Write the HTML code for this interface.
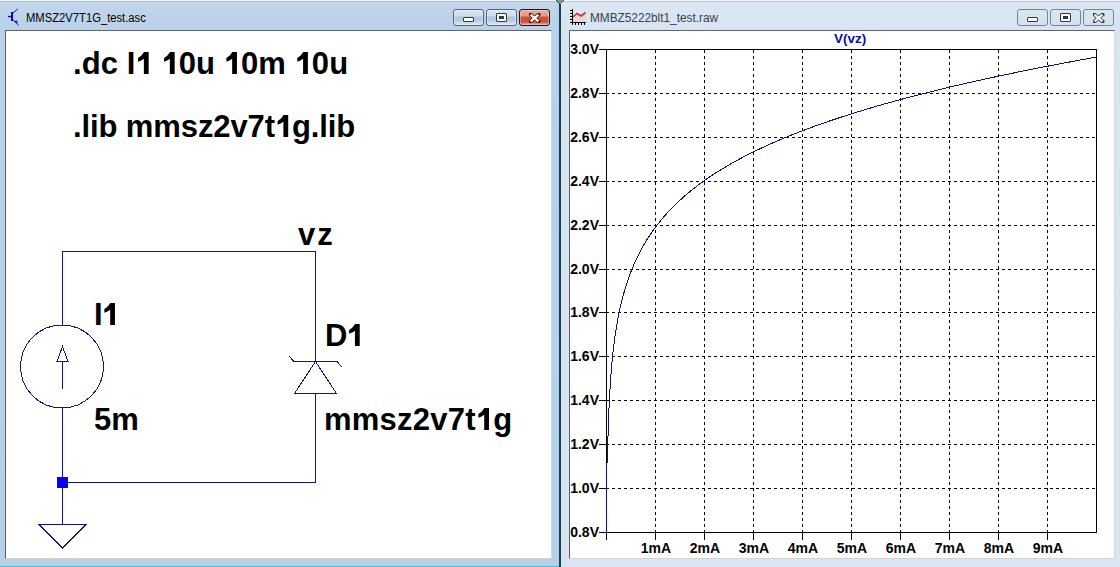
<!DOCTYPE html>
<html><head><meta charset="utf-8"><style>
*{margin:0;padding:0;box-sizing:border-box}
html,body{width:1120px;height:567px;overflow:hidden;background:#fff}
body{position:relative;font-family:"Liberation Sans",sans-serif}
.abs{position:absolute}
.win{position:absolute;top:0;height:567px}
#lw{left:0;width:559px;background:linear-gradient(#c3d7ec 0px,#b9d1ea 30px,#b7cfe8 100%)}
#rw{left:561px;width:559px;background:linear-gradient(#dce7f3 0px,#d7e4f2 30px,#d9e5f2 100%)}
#sep{position:absolute;left:559px;top:0;width:2px;height:567px;background:#1f3f48}
#topline{position:absolute;left:0;top:0;width:1120px;height:1px;background:#f4f8fc}
.title{position:absolute;font-size:12px;white-space:pre;line-height:14px}
.lbl{position:absolute;font-weight:bold;white-space:pre;line-height:13px}
.client{position:absolute;top:30px;background:#fff;border-top:1px solid #5f636b;border-left:1px solid #5a5e68;border-right:1px solid #d8d8d8;border-bottom:1px solid #d4d4d4}
.btn{position:absolute;top:9px;width:31px;height:17px;border:1px solid #4f6580;border-radius:3px;background:linear-gradient(#d9e6f4 0,#cddded 6px,#b3c4d9 7px,#b9cadf 11px,#c9dbee 12px,#d3e3f3 100%);box-shadow:inset 0 0 0 1px rgba(255,255,255,0.35)}
.gmin{position:absolute;width:11px;height:5px;background:#fff;border:1px solid #2f3a48;border-radius:1px}
.gmax{position:absolute;width:11px;height:9px;background:#fff;border:1px solid #2f3a48;border-radius:1px}
.gmax::after{content:"";position:absolute;left:2px;top:2px;width:5px;height:3px;background:#2f3a48}
.btn.ia{border-color:#74859a;background:linear-gradient(#dbe6f2 0,#d5e1ee 100%);box-shadow:none}
.btn.close{border-color:#2a0f0c;background:linear-gradient(#eaaa9c 0,#e39a88 6px,#cf5435 7px,#cc4f30 12px,#e1806a 13px,#e99a88 100%)}
.yl{position:absolute;left:561px;width:38px;text-align:right;font-family:"Liberation Sans",sans-serif;font-weight:bold;font-size:14px;line-height:13px;color:#000}
.xl{position:absolute;top:542px;width:60px;text-align:center;font-family:"Liberation Sans",sans-serif;font-weight:bold;font-size:14px;line-height:13px;color:#000}
.one{position:relative;color:transparent}
.one::after{content:"";position:absolute;left:0;top:0.189em;width:0.5562em;height:0.716em;background:#000;clip-path:polygon(77.4% 0,77.4% 100%,49.5% 100%,49.5% 31.5%,33.9% 38.7%,15.9% 44.1%,15.9% 27.5%,33.9% 18%,45.5% 6.8%,50.7% 0)}
.sch{position:absolute;font-family:"Liberation Sans",sans-serif;font-weight:bold;font-size:30px;line-height:30px;color:#000;white-space:pre}
</style></head><body>
<div id="lw" class="win"></div>
<div id="rw" class="win"></div>
<div id="sep"></div>
<div id="topline"></div>
<div class="abs" style="left:0;top:1px;width:557px;height:1px;background:#a9bbd3"></div>
<div class="abs" style="left:563px;top:1px;width:557px;height:1px;background:#b9c7d8"></div>
<div class="abs" style="left:0;top:566px;width:559px;height:1px;background:#3cc4d4"></div>
<div class="abs" style="left:557px;top:3px;width:2px;height:563px;background:#a8d4ee"></div>
<svg class="abs" style="left:554px;top:0" width="12" height="5" shape-rendering="crispEdges">
  <polygon points="2,0 10,0 6,4" fill="#8a96a0"/>
  <rect x="2" y="0" width="1" height="1" fill="#203038"/>
  <rect x="3" y="1" width="1" height="1" fill="#203038"/>
  <rect x="4" y="2" width="1" height="1" fill="#203038"/>
  <rect x="9" y="0" width="1" height="1" fill="#404850"/>
  <rect x="8" y="1" width="1" height="1" fill="#404850"/>
  <rect x="7" y="2" width="1" height="1" fill="#404850"/>
</svg>

<!-- left window chrome -->
<svg class="abs" style="left:0;top:0" width="24" height="30">
  <line x1="8" y1="16.5" x2="11" y2="16.5" stroke="#0a0ac8" stroke-width="1.3"/>
  <rect x="11" y="12" width="2" height="9" fill="#0a0ac8"/>
  <line x1="13" y1="13" x2="17.8" y2="8.8" stroke="#10108a" stroke-width="1"/>
  <line x1="12.8" y1="19.5" x2="18.6" y2="25.2" stroke="#10108a" stroke-width="1"/>
  <polygon points="14,21.2 17.2,20.6 17.4,23.6" fill="#0a0ac8"/>
</svg>
<div class="title" style="left:26px;top:11px;font-size:12px;letter-spacing:0px;color:#000;transform:scaleX(0.936);transform-origin:0 0">MMSZ2V7T1G_test.asc</div>
<div class="btn" style="left:453px"><div class="gmin" style="left:9px;top:7px"></div></div>
<div class="btn" style="left:486px"><div class="gmax" style="left:9px;top:3px"></div></div>
<div class="btn close" style="left:519px"><svg class="abs" style="left:9px;top:3px" width="12" height="10"><path d="M1.6 1.6 L9.4 8.4 M9.4 1.6 L1.6 8.4" stroke="#3a1c1c" stroke-width="3.8" stroke-linecap="square"/><path d="M2.4 2.3 L8.6 7.7 M8.6 2.3 L2.4 7.7" stroke="#fff" stroke-width="2.2" stroke-linecap="square"/></svg></div>
<div class="client" style="left:5px;width:547px;height:529px"></div>

<!-- right window chrome -->
<svg class="abs" style="left:566px;top:6px" width="24" height="22" shape-rendering="crispEdges">
  <polygon points="7,11 11,7.5 15,10 20,6 20,16 7,16" fill="#f0d0c8" opacity="0.7"/>
  <polyline points="7,11 11,7.5 15,10 19.5,6.5" fill="none" stroke="#d82828" stroke-width="1.6" shape-rendering="auto"/>
  <rect x="6" y="3" width="1" height="14" fill="#000"/>
  <rect x="4" y="16" width="16" height="1" fill="#000"/>
  <rect x="4" y="4" width="2" height="1" fill="#000"/>
  <rect x="4" y="7" width="2" height="1" fill="#000"/>
  <rect x="4" y="10" width="2" height="1" fill="#000"/>
  <rect x="4" y="13" width="2" height="1" fill="#000"/>
  <rect x="6" y="17" width="1" height="2" fill="#000"/>
  <rect x="9" y="17" width="1" height="2" fill="#000"/>
  <rect x="12" y="17" width="1" height="2" fill="#000"/>
  <rect x="15" y="17" width="1" height="2" fill="#000"/>
  <rect x="18" y="17" width="1" height="2" fill="#000"/>
</svg>
<div class="title" style="left:590px;top:11px;font-size:12px;letter-spacing:0px;color:#38424c;transform:scaleX(0.984);transform-origin:0 0">MMBZ5222blt1_test.raw</div>
<div class="btn ia" style="left:1017px"><div class="gmin" style="left:9px;top:7px"></div></div>
<div class="btn ia" style="left:1050px"><div class="gmax" style="left:9px;top:3px"></div></div>
<div class="btn ia" style="left:1083px"><svg class="abs" style="left:9px;top:3px" width="12" height="10"><path d="M1.6 1.6 L9.4 8.4 M9.4 1.6 L1.6 8.4" stroke="#343a44" stroke-width="3.8" stroke-linecap="square"/><path d="M2.4 2.3 L8.6 7.7 M8.6 2.3 L2.4 7.7" stroke="#fff" stroke-width="2.2" stroke-linecap="square"/></svg></div>
<div class="client" style="left:569px;width:546px;height:529px"></div>

<!-- schematic -->
<svg class="abs" style="left:0;top:0" width="560" height="567" shape-rendering="crispEdges">
  <g stroke="#14128a" stroke-width="1" fill="none">
    <polyline points="62.5,325 62.5,251.5 315.5,251.5 315.5,361"/>
    <line x1="315.5" y1="393" x2="315.5" y2="482.5"/>
    <polyline points="62.5,408 62.5,524"/>
    <line x1="62.5" y1="482.5" x2="315.5" y2="482.5"/>
  </g>
  <g stroke="#14128a" stroke-width="1" fill="none" shape-rendering="crispEdges">
    <circle cx="62" cy="366.5" r="41.5"/>
    <polygon points="62.5,346.5 57,361.5 68,361.5"/>
    <line x1="62.5" y1="361.5" x2="62.5" y2="389"/>
    <polygon points="315.5,361.5 294.5,393.5 336.5,393.5"/>
    <polyline points="289,356 294,361.5 337,361.5 342,367"/>
    <polygon points="39,524.5 86,524.5 62.5,548"/>
  </g>
  <rect x="57.5" y="477.5" width="10" height="10" fill="#0000f4" stroke="#14128a" stroke-width="1"/>
</svg>
<div class="sch" style="left:73px;top:49px;font-size:31px;letter-spacing:0.06px">.dc I<span class="one">1</span> <span class="one">1</span>0u <span class="one">1</span>0m <span class="one">1</span>0u</div>
<div class="sch" style="left:73px;top:112px;font-size:31px;letter-spacing:-0.11px">.lib mmsz2v7t<span class="one">1</span>g.lib</div>
<div class="sch" style="left:298px;top:220px;font-size:31px;letter-spacing:2.0px">vz</div>
<div class="sch" style="left:94px;top:300px;font-size:31px;letter-spacing:-1.0px">I<span class="one">1</span></div>
<div class="sch" style="left:94px;top:405px;font-size:31px;letter-spacing:0.0px">5m</div>
<div class="sch" style="left:325px;top:321px;font-size:31px;letter-spacing:-1.0px">D<span class="one">1</span></div>
<div class="sch" style="left:324px;top:405px;font-size:31px;letter-spacing:0.22px">mmsz2v7t<span class="one">1</span>g</div>
<!-- plot -->
<svg class="abs" style="left:0;top:0" width="1120" height="567" shape-rendering="crispEdges">
<rect x="606.5" y="49.5" width="490" height="483" fill="none" stroke="#000" stroke-width="1"/>
<line x1="606" y1="93.5" x2="1096" y2="93.5" stroke="#000" stroke-dasharray="3 3"/>
<line x1="606" y1="137.5" x2="1096" y2="137.5" stroke="#000" stroke-dasharray="3 3"/>
<line x1="606" y1="181.5" x2="1096" y2="181.5" stroke="#000" stroke-dasharray="3 3"/>
<line x1="606" y1="225.5" x2="1096" y2="225.5" stroke="#000" stroke-dasharray="3 3"/>
<line x1="606" y1="269.5" x2="1096" y2="269.5" stroke="#000" stroke-dasharray="3 3"/>
<line x1="606" y1="312.5" x2="1096" y2="312.5" stroke="#000" stroke-dasharray="3 3"/>
<line x1="606" y1="356.5" x2="1096" y2="356.5" stroke="#000" stroke-dasharray="3 3"/>
<line x1="606" y1="400.5" x2="1096" y2="400.5" stroke="#000" stroke-dasharray="3 3"/>
<line x1="606" y1="444.5" x2="1096" y2="444.5" stroke="#000" stroke-dasharray="3 3"/>
<line x1="606" y1="488.5" x2="1096" y2="488.5" stroke="#000" stroke-dasharray="3 3"/>
<line x1="655.5" y1="50" x2="655.5" y2="532" stroke="#000" stroke-dasharray="3 3"/>
<line x1="704.5" y1="50" x2="704.5" y2="532" stroke="#000" stroke-dasharray="3 3"/>
<line x1="753.5" y1="50" x2="753.5" y2="532" stroke="#000" stroke-dasharray="3 3"/>
<line x1="802.5" y1="50" x2="802.5" y2="532" stroke="#000" stroke-dasharray="3 3"/>
<line x1="851.5" y1="50" x2="851.5" y2="532" stroke="#000" stroke-dasharray="3 3"/>
<line x1="900.5" y1="50" x2="900.5" y2="532" stroke="#000" stroke-dasharray="3 3"/>
<line x1="949.5" y1="50" x2="949.5" y2="532" stroke="#000" stroke-dasharray="3 3"/>
<line x1="998.5" y1="50" x2="998.5" y2="532" stroke="#000" stroke-dasharray="3 3"/>
<line x1="1047.5" y1="50" x2="1047.5" y2="532" stroke="#000" stroke-dasharray="3 3"/>
<line x1="599" y1="49.5" x2="606" y2="49.5" stroke="#000"/>
<line x1="599" y1="93.5" x2="606" y2="93.5" stroke="#000"/>
<line x1="599" y1="137.5" x2="606" y2="137.5" stroke="#000"/>
<line x1="599" y1="181.5" x2="606" y2="181.5" stroke="#000"/>
<line x1="599" y1="225.5" x2="606" y2="225.5" stroke="#000"/>
<line x1="599" y1="269.5" x2="606" y2="269.5" stroke="#000"/>
<line x1="599" y1="312.5" x2="606" y2="312.5" stroke="#000"/>
<line x1="599" y1="356.5" x2="606" y2="356.5" stroke="#000"/>
<line x1="599" y1="400.5" x2="606" y2="400.5" stroke="#000"/>
<line x1="599" y1="444.5" x2="606" y2="444.5" stroke="#000"/>
<line x1="599" y1="488.5" x2="606" y2="488.5" stroke="#000"/>
<line x1="599" y1="532.5" x2="606" y2="532.5" stroke="#000"/>
<line x1="606.5" y1="532" x2="606.5" y2="540" stroke="#000"/>
<line x1="655.5" y1="532" x2="655.5" y2="540" stroke="#000"/>
<line x1="704.5" y1="532" x2="704.5" y2="540" stroke="#000"/>
<line x1="753.5" y1="532" x2="753.5" y2="540" stroke="#000"/>
<line x1="802.5" y1="532" x2="802.5" y2="540" stroke="#000"/>
<line x1="851.5" y1="532" x2="851.5" y2="540" stroke="#000"/>
<line x1="900.5" y1="532" x2="900.5" y2="540" stroke="#000"/>
<line x1="949.5" y1="532" x2="949.5" y2="540" stroke="#000"/>
<line x1="998.5" y1="532" x2="998.5" y2="540" stroke="#000"/>
<line x1="1047.5" y1="532" x2="1047.5" y2="540" stroke="#000"/>
<polyline points="606.50,532.50 606.50,466.64 607.48,460.69 607.52,458.50 607.56,456.31 607.60,454.12 607.65,451.93 607.69,449.73 607.74,447.54 607.79,445.33 607.84,443.13 607.90,440.92 607.95,438.71 608.01,436.49 608.07,434.27 608.14,432.05 608.20,429.83 608.27,427.60 608.34,425.37 608.42,423.14 608.50,420.90 608.58,418.66 608.66,416.42 608.75,414.17 608.84,411.92 608.93,409.67 609.03,407.41 609.13,405.15 609.24,402.89 609.35,400.62 609.46,398.35 609.58,396.08 609.71,393.80 609.84,391.52 609.97,389.24 610.11,386.95 610.26,384.66 610.41,382.37 610.56,380.07 610.73,377.77 610.90,375.47 611.08,373.16 611.26,370.85 611.45,368.54 611.65,366.22 611.86,363.90 612.08,361.57 612.30,359.24 612.53,356.91 612.78,354.57 613.03,352.23 613.29,349.89 613.57,347.54 613.85,345.19 614.15,342.84 614.46,340.48 614.78,338.12 615.11,335.75 615.46,333.38 615.82,331.01 616.20,328.63 616.59,326.25 616.99,323.86 617.42,321.47 617.86,319.08 618.31,316.68 618.79,314.27 619.29,311.87 619.80,309.46 620.34,307.04 620.89,304.62 621.47,302.20 622.08,299.77 622.71,297.33 623.36,294.90 624.04,292.45 624.75,290.01 625.48,287.55 626.25,285.10 627.04,282.63 627.87,280.17 628.73,277.70 629.63,275.22 630.56,272.74 631.53,270.25 632.54,267.76 633.59,265.26 634.68,262.76 635.82,260.25 637.00,257.74 638.23,255.22 639.51,252.69 640.84,250.16 642.22,247.62 643.66,245.08 645.16,242.53 646.72,239.98 648.34,237.42 650.02,234.85 651.78,232.27 653.60,229.69 655.50,227.11 662.97,217.75 670.45,209.48 677.92,202.07 685.40,195.33 692.87,189.16 700.35,183.46 707.82,178.16 715.30,173.20 722.77,168.54 730.25,164.15 737.72,159.98 745.19,156.02 752.67,152.25 760.14,148.65 767.62,145.19 775.09,141.88 782.57,138.69 790.04,135.62 797.52,132.66 804.99,129.79 812.47,127.02 819.94,124.33 827.42,121.73 834.89,119.20 842.36,116.73 849.84,114.34 857.31,112.00 864.79,109.73 872.26,107.50 879.74,105.34 887.21,103.22 894.69,101.14 902.16,99.11 909.64,97.13 917.11,95.18 924.58,93.27 932.06,91.40 939.53,89.57 947.01,87.76 954.48,85.99 961.96,84.25 969.43,82.54 976.91,80.86 984.38,79.21 991.86,77.58 999.33,75.98 1006.81,74.40 1014.28,72.84 1021.75,71.31 1029.23,69.80 1036.70,68.31 1044.18,66.84 1051.65,65.39 1059.13,63.96 1066.60,62.55 1074.08,61.15 1081.55,59.77 1089.03,58.41 1096.50,57.07" fill="none" stroke="#14107e" stroke-width="1"/>
</svg>
<div class="yl" style="top:43px">3.0V</div>
<div class="yl" style="top:87px">2.8V</div>
<div class="yl" style="top:131px">2.6V</div>
<div class="yl" style="top:175px">2.4V</div>
<div class="yl" style="top:219px">2.2V</div>
<div class="yl" style="top:263px">2.0V</div>
<div class="yl" style="top:306px">1.8V</div>
<div class="yl" style="top:350px">1.6V</div>
<div class="yl" style="top:394px">1.4V</div>
<div class="yl" style="top:438px">1.2V</div>
<div class="yl" style="top:482px">1.0V</div>
<div class="yl" style="top:526px">0.8V</div>
<div class="xl" style="left:626px">1mA</div>
<div class="xl" style="left:675px">2mA</div>
<div class="xl" style="left:724px">3mA</div>
<div class="xl" style="left:773px">4mA</div>
<div class="xl" style="left:822px">5mA</div>
<div class="xl" style="left:871px">6mA</div>
<div class="xl" style="left:920px">7mA</div>
<div class="xl" style="left:969px">8mA</div>
<div class="xl" style="left:1018px">9mA</div>
<div class="lbl" style="left:834px;top:32px;font-size:13.5px;letter-spacing:0px;color:#0a0ab4">V(vz)</div>
</body></html>
